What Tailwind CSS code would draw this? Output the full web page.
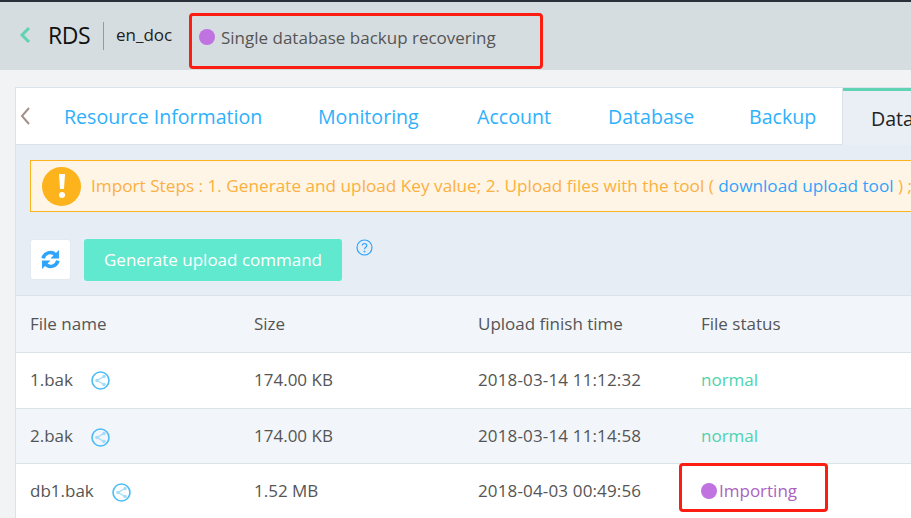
<!DOCTYPE html>
<html lang="en">
<head>
  <meta charset="UTF-8" />
  <title>RDS</title>
  <script src="https://cdn.jsdelivr.net/npm/@tailwindcss/browser@4"></script>
</head>
<body class="relative w-[911px] h-[518px] overflow-hidden bg-[#f2f3f5] font-['Open_Sans',sans-serif]">
  <!-- top bar -->
  <div class="h-[2px] bg-[#2b2f3a]"></div>
  <header class="h-[68px] bg-[#d5dde0] flex items-center pl-[19px]">
    <svg class="w-[12px] h-[18px] mt-[-2px]" viewBox="0 0 12 18" fill="none" stroke="#5fd3b3" stroke-width="3"><path d="M10 2 L3 9 L10 16" /></svg>
    <span class="ml-[17px] w-[42px] text-[23px] leading-none text-[#111] mt-[-1px] tracking-[-0.5px]">RDS</span>
    <span class="ml-[13px] w-px h-[28px] bg-[#999] mt-[-1px]"></span>
    <span class="ml-[12px] w-[56px] text-[17px] text-[#222] mt-[-3px]">en_doc</span>
    <span class="ml-[27px] w-[16px] h-[16px] rounded-full bg-[#bf72e0] mt-[2px]"></span>
    <span class="ml-[6px] text-[17px] text-[#555] mt-[4px]">Single database backup recovering</span>
  </header>

  <main class="mt-[17px] ml-[15px] border-l border-t border-[#dbe3ea] bg-[#e6edf5] h-[431px] overflow-hidden">
    <!-- tabs -->
    <div class="flex h-[57px] w-[1000px]">
      <div class="flex items-center bg-white border-b border-r border-[#dbe3ea] w-[827px] pl-[4px]">
        <svg class="w-[10px] h-[18px]" viewBox="0 0 10 18" fill="none" stroke="#a58f8a" stroke-width="2"><path d="M9 1 L2 9 L9 17" /></svg>
        <div class="flex text-[19.6px] text-[#2fb0fb] ml-[34px] mt-[2px]">
          <span class="w-[254px]">Resource Information</span>
          <span class="w-[159px]">Monitoring</span>
          <span class="w-[131px]">Account</span>
          <span class="w-[141px]">Database</span>
          <span>Backup</span>
        </div>
      </div>
      <div class="flex-1 border-t-[3px] border-[#5fd3b3] pl-[28px] text-[19.6px] text-[#222] leading-[56px] bg-[#eaeff5]">Data</div>
    </div>

    <!-- alert -->
    <div class="mt-[15px] ml-[14px] w-[1000px] h-[52px] flex items-center border border-[#fdb31b] bg-[#fff5e6] pl-[11px] text-[17.2px] text-[#fbb040]">
      <span class="w-[39px] h-[39px] rounded-full bg-[#fdb31b] flex items-center justify-center shrink-0">
        <svg class="w-[8px] h-[26px]" viewBox="0 0 8 26" fill="white"><path d="M1 1 H7 L6 16 H2 Z" /><circle cx="4" cy="22" r="3" /></svg>
      </span>
      <span class="ml-[10px] whitespace-nowrap">Import Steps : 1. Generate and upload Key value; 2. Upload files with the tool ( <span class="text-[#2fa4fb]">download upload tool</span> ) ;</span>
    </div>

    <!-- toolbar -->
    <div class="mt-[27px] ml-[14px] h-[56px] flex items-start">
      <button class="w-[41px] h-[41px] bg-white rounded-[3px] border border-[#e3e9f0] flex items-center justify-center">
        <svg class="w-[19px] h-[19px]" viewBox="0 0 18 18" fill="none" stroke="#2fa4fb" stroke-width="3.4"><path d="M2 8 C3 3 10 0 14 5" /><path d="M16 10 C15 15 8 18 4 13" /><path d="M17 0 V8 H9 Z" fill="#2fa4fb" stroke="none" /><path d="M1 18 V10 H9 Z" fill="#2fa4fb" stroke="none" /></svg>
      </button>
      <button class="ml-[13px] w-[258px] h-[42px] bg-[#60e9ce] rounded-[3px] text-white text-[17px]">Generate upload command</button>
      <svg class="ml-[14px] w-[17px] h-[17px]" viewBox="0 0 17 17" fill="none" stroke="#2fa4fb"><circle cx="8.5" cy="8.5" r="7.5" stroke-width="1.2" /><path d="M6.3 6.6 C6.3 3.8 10.8 3.8 10.8 6.6 C10.8 8.4 8.5 8.2 8.5 10.2" stroke-width="1.2" /><circle cx="8.5" cy="12.6" r="0.6" /></svg>
    </div>

    <!-- table -->
    <div class="border-t border-[#dbe3ea] text-[17px] text-[#555]">
      <div class="h-[57px] grid grid-cols-[224px_224px_223px_1fr] pl-[14px] items-center bg-[#f2f5fa] border-b border-[#dbe3ea]">
        <span>File name</span><span>Size</span><span>Upload finish time</span><span>File status</span>
      </div>
      <div class="h-[56px] grid grid-cols-[224px_224px_223px_1fr] pl-[14px] pb-[2px] items-center bg-white border-b border-[#dbe3ea]">
        <span class="flex items-center">1.bak
          <svg class="ml-[18px] w-[19px] h-[19px] mt-[2px]" viewBox="0 0 19 19" fill="none" stroke="#4cbcf7"><circle cx="9.5" cy="9.5" r="8.5" stroke-width="1.6" /><path d="M13 5.5 L6 9.5 L13 13.5" stroke="#a5dcf9" stroke-width="1.4" /><circle cx="13" cy="5.5" r="1.8" fill="#a5dcf9" stroke="none" /><circle cx="6" cy="9.5" r="1.8" fill="#a5dcf9" stroke="none" /><circle cx="13" cy="13.5" r="1.8" fill="#a5dcf9" stroke="none" /></svg>
        </span>
        <span>174.00 KB</span><span class="tracking-[0.15px]">2018-03-14 11:12:32</span><span class="text-[#4fd2ad]">normal</span>
      </div>
      <div class="h-[55px] grid grid-cols-[224px_224px_223px_1fr] pl-[14px] items-center bg-[#f2f5fa] border-b border-[#dbe3ea]">
        <span class="flex items-center">2.bak
          <svg class="ml-[18px] w-[19px] h-[19px] mt-[2px]" viewBox="0 0 19 19" fill="none" stroke="#4cbcf7"><circle cx="9.5" cy="9.5" r="8.5" stroke-width="1.6" /><path d="M13 5.5 L6 9.5 L13 13.5" stroke="#a5dcf9" stroke-width="1.4" /><circle cx="13" cy="5.5" r="1.8" fill="#a5dcf9" stroke="none" /><circle cx="6" cy="9.5" r="1.8" fill="#a5dcf9" stroke="none" /><circle cx="13" cy="13.5" r="1.8" fill="#a5dcf9" stroke="none" /></svg>
        </span>
        <span>174.00 KB</span><span class="tracking-[0.15px]">2018-03-14 11:14:58</span><span class="text-[#4fd2ad]">normal</span>
      </div>
      <div class="h-[56px] grid grid-cols-[224px_224px_223px_1fr] pl-[14px] pb-[2px] items-center bg-white">
        <span class="flex items-center">db1.bak
          <svg class="ml-[18px] w-[19px] h-[19px] mt-[2px]" viewBox="0 0 19 19" fill="none" stroke="#4cbcf7"><circle cx="9.5" cy="9.5" r="8.5" stroke-width="1.6" /><path d="M13 5.5 L6 9.5 L13 13.5" stroke="#a5dcf9" stroke-width="1.4" /><circle cx="13" cy="5.5" r="1.8" fill="#a5dcf9" stroke="none" /><circle cx="6" cy="9.5" r="1.8" fill="#a5dcf9" stroke="none" /><circle cx="13" cy="13.5" r="1.8" fill="#a5dcf9" stroke="none" /></svg>
        </span>
        <span>1.52 MB</span><span class="tracking-[0.15px]">2018-04-03 00:49:56</span>
        <span class="flex items-center text-[#ac62c0]"><span class="w-[16px] h-[16px] rounded-full bg-[#bf72e0] mr-[2px]"></span>Importing</span>
      </div>
    </div>
  </main>

  <!-- red annotation boxes -->
  <div class="absolute left-[189px] top-[13px] w-[354px] h-[56px] border-[3.5px] border-[#fb1d12] rounded-[4px]"></div>
  <div class="absolute left-[679px] top-[463px] w-[149px] h-[49px] border-[3.5px] border-[#fb1d12] rounded-[4px]"></div>
</body>
</html>
